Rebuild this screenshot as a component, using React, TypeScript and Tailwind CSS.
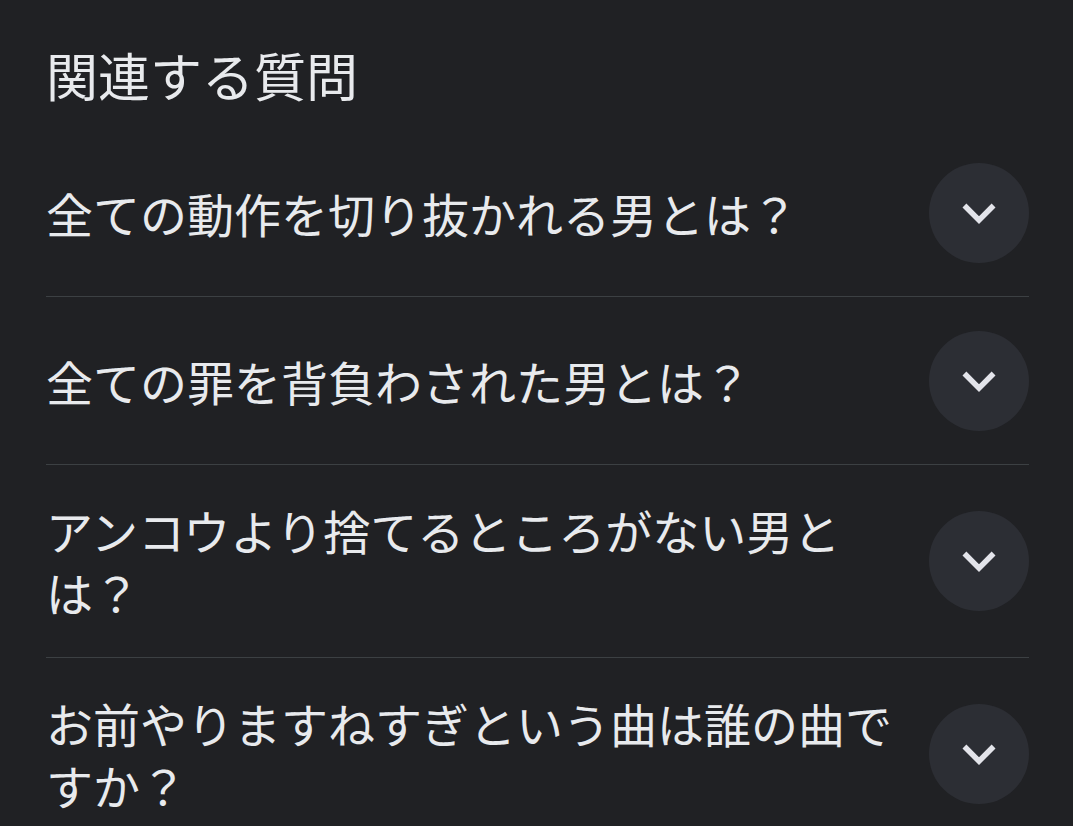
const questions = [
  "全ての動作を切り抜かれる男とは？",
  "全ての罪を背負わされた男とは？",
  "アンコウより捨てるところがない男とは？",
  "お前やりますねすぎという曲は誰の曲ですか？",
];

const ExpandMore = () => (
  <svg width="66" height="66" viewBox="0 0 24 24" fill="currentColor">
    <path d="M16.59 8.59L12 13.17 7.41 8.59 6 10l6 6 6-6z" />
  </svg>
);

export default function App() {
  return (
    <div
      className="min-h-screen w-full overflow-hidden bg-[#202124] pl-[46px] pr-[44px] text-[#e8eaed]"
      style={{ fontFamily: '"Noto Sans CJK JP", "Noto Sans", sans-serif' }}
    >
      <h2 className="pt-[43px] mb-[22px] text-[52px] leading-[64px] font-normal">関連する質問</h2>
      <div>
        {questions.map((q, i) => (
          <div
            key={i}
            className={
              "flex min-h-[168px] items-center gap-5 " +
              (i < questions.length - 1 ? "border-b border-[#3c4043]" : "")
            }
          >
            <div className="flex-1 py-[34px] text-[47px] leading-[62px] font-normal">{q}</div>
            <button className="flex h-[100px] w-[100px] shrink-0 items-center justify-center rounded-full bg-[#2c2e34] text-[#e3e4ea]">
              <ExpandMore />
            </button>
          </div>
        ))}
      </div>
    </div>
  );
}
